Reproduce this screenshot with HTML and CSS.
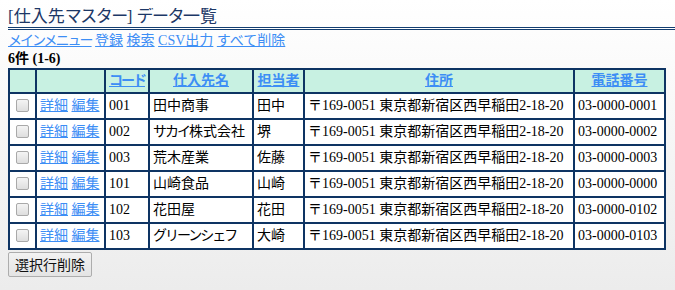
FILE: index.html
```html
<!DOCTYPE html>
<html lang="ja">
<head>
<meta charset="utf-8">
<link rel="stylesheet" href="styles.css">
</head>
<body>
<h1 class="title">[仕入先<span class="kana">マスター</span>] <span class="kana">データ</span>一覧</h1>
<div class="nav"><a href="#"><span class="kana">メインメニュー</span></a> <a href="#">登録</a> <a href="#">検索</a> <a href="#">CSV出力</a> <a href="#">すべて削除</a></div>
<div class="count">6件 (1-6)</div>
<table class="grid">
<colgroup>
<col class="c-chk"><col class="c-act"><col class="c-code"><col class="c-name"><col class="c-tan"><col class="c-addr"><col class="c-tel">
</colgroup>
<thead>
<tr><th></th><th></th><th><a href="#"><span class="kana">コード</span></a></th><th><a href="#">仕入先名</a></th><th><a href="#">担当者</a></th><th><a href="#">住所</a></th><th><a href="#">電話番号</a></th></tr>
</thead>
<tbody>
<tr><td class="chk"><input type="checkbox" class="cb"></td><td><a href="#">詳細</a> <a href="#">編集</a></td><td>001</td><td>田中商事</td><td>田中</td><td>〒169-0051 東京都新宿区西早稲田2-18-20</td><td>03-0000-0001</td></tr>
<tr><td class="chk"><input type="checkbox" class="cb"></td><td><a href="#">詳細</a> <a href="#">編集</a></td><td>002</td><td><span class="kana">サカイ</span>株式会社</td><td>堺</td><td>〒169-0051 東京都新宿区西早稲田2-18-20</td><td>03-0000-0002</td></tr>
<tr><td class="chk"><input type="checkbox" class="cb"></td><td><a href="#">詳細</a> <a href="#">編集</a></td><td>003</td><td>荒木産業</td><td>佐藤</td><td>〒169-0051 東京都新宿区西早稲田2-18-20</td><td>03-0000-0003</td></tr>
<tr><td class="chk"><input type="checkbox" class="cb"></td><td><a href="#">詳細</a> <a href="#">編集</a></td><td>101</td><td>山崎食品</td><td>山崎</td><td>〒169-0051 東京都新宿区西早稲田2-18-20</td><td>03-0000-0000</td></tr>
<tr><td class="chk"><input type="checkbox" class="cb"></td><td><a href="#">詳細</a> <a href="#">編集</a></td><td>102</td><td>花田屋</td><td>花田</td><td>〒169-0051 東京都新宿区西早稲田2-18-20</td><td>03-0000-0102</td></tr>
<tr><td class="chk"><input type="checkbox" class="cb"></td><td><a href="#">詳細</a> <a href="#">編集</a></td><td>103</td><td><span class="kana">グリーンシェフ</span></td><td>大崎</td><td>〒169-0051 東京都新宿区西早稲田2-18-20</td><td>03-0000-0103</td></tr>
</tbody>
</table>
<button class="btn" type="button">選択行削除</button>
</body>
</html>
```
FILE: styles.css
```css
html {
  background: linear-gradient(#ffffff, #ececec) no-repeat;
  min-height: 100%;
}
body {
  margin: 8px 0 0 8px;
  font-family: "Liberation Serif", "Noto Sans CJK JP", serif;
  font-size: 14px;
  color: #000;
}
a { color: #3d8ef5; text-decoration: underline; }
.kana { letter-spacing: -2px; }
.title {
  margin: 0;
  font-size: 17px;
  font-weight: normal;
  line-height: 18px;
  color: #1c3766;
  padding-bottom: 1px;
  border-bottom: 3px double #123d70;
}
.title .kana { letter-spacing: -1.5px; }
.nav {
  margin-top: 2px;
  line-height: 18px;
}
.count {
  font-weight: bold;
  line-height: 18px;
}
.grid {
  border-collapse: collapse;
  table-layout: fixed;
  width: 656px;
}
.c-chk { width: 27px; }
.c-act { width: 69px; }
.c-code { width: 44px; }
.c-name { width: 104px; }
.c-tan { width: 51px; }
.c-addr { width: 270px; }
.c-tel { width: 91px; }
.grid th, .grid td {
  border: 2px solid #0e3463;
  padding: 2px 3px;
  line-height: 20px;
  white-space: nowrap;
  text-align: left;
  background: #fff;
}
.grid th {
  background: #c8f1e2;
  text-align: center;
  font-weight: bold;
  padding: 1px 0;
}
.grid td.chk { text-align: center; padding: 2px 0; }
.cb {
  appearance: none;
  -webkit-appearance: none;
  width: 13px;
  height: 13px;
  margin: 0;
  vertical-align: -2px;
  border: 1px solid #a9a9a9;
  border-radius: 2px;
  background: linear-gradient(#f4f4f4, #dedede);
}
.btn {
  margin-top: 2px;
  font-family: "Noto Sans CJK JP", sans-serif;
  font-size: 14px;
  line-height: 19px;
  color: #111;
  padding: 2px 6px;
  border: 1px solid #adadad;
  border-radius: 2px;
  background: linear-gradient(#f2f2f2, #e4e4e4);
}
```
